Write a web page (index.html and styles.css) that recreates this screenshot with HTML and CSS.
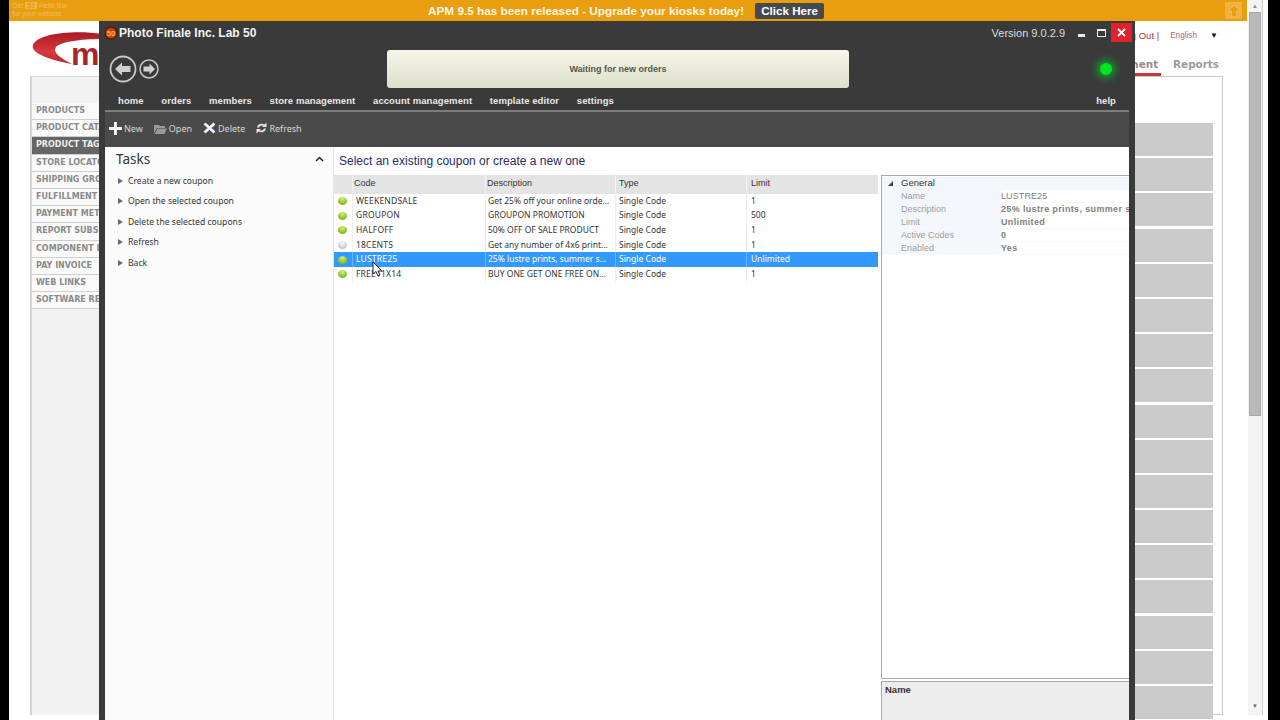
FILE: index.html
```html
<!DOCTYPE html>
<html lang="en">
<head>
<meta charset="utf-8">
<title>Photo Finale Inc. Lab 50</title>
<link rel="stylesheet" href="styles.css">
</head>
<body>
<div class="site">
  <div class="page">
    <div class="hellobar">
      <div class="hello-promo">Get <b>53</b> Hello Bar<br>for your website</div>
      <div class="hello-msg">APM 9.5 has been released - Upgrade your kiosks today!</div>
      <a class="hello-btn">Click Here</a>
      <div class="hello-up"><svg width="16" height="16" viewBox="0 0 16 16"><path d="M8 2 L14 8 H10.5 V14 H5.5 V8 H2 Z" fill="#e99e10" stroke="#f5bd55"/></svg></div>
    </div>
    <header class="site-head">
      <svg class="logo" width="80" height="46" viewBox="0 0 80 46"><defs><linearGradient id="swoosh" x1="0" y1="0" x2="0" y2="1"><stop offset="0" stop-color="#a81c24"/><stop offset=".6" stop-color="#d8383c"/><stop offset="1" stop-color="#b52a30"/></linearGradient></defs><path d="M72 4 C45 0 8 3 3 15 C0 23 20 30 42 34 C30 28 22 22 26 17 C30 12 50 9 72 9 Z" fill="url(#swoosh)"/><text x="41" y="35" class="logo-m">m</text></svg>
      <div class="head-right">
        <div class="util"><span class="util-out">Log Out |</span><span class="util-lang">English</span><span class="util-arrow">▼</span></div>
        <nav class="tabs"><span class="tab tab-on">Management</span><span class="tab">Reports</span></nav>
      </div>
    </header>
    <div class="page-main">
      <aside class="sidebar">
        <div class="side-item">PRODUCTS</div>
        <div class="side-item">PRODUCT CATALOG</div>
        <div class="side-item side-on">PRODUCT TAGS</div>
        <div class="side-item">STORE LOCATOR</div>
        <div class="side-item">SHIPPING GROUPS</div>
        <div class="side-item">FULFILLMENT</div>
        <div class="side-item">PAYMENT METHODS</div>
        <div class="side-item">REPORT SUBSCRIPTIONS</div>
        <div class="side-item">COMPONENT LIBRARY</div>
        <div class="side-item">PAY INVOICE</div>
        <div class="side-item">WEB LINKS</div>
        <div class="side-item">SOFTWARE RELEASES</div>
      </aside>
      <section class="panel">
        <div class="block"></div><div class="block"></div><div class="block"></div><div class="block"></div>
        <div class="block"></div><div class="block"></div><div class="block"></div><div class="block"></div>
        <div class="block"></div><div class="block"></div><div class="block"></div><div class="block"></div>
        <div class="block"></div><div class="block"></div><div class="block"></div><div class="block"></div>
        <div class="block"></div>
      </section>
    </div>
  </div>
  <div class="scrollbar">
    <div class="sb-track">
      <span class="sb-arrow">▲</span>
      <div class="sb-thumb"></div>
      <span class="sb-arrow sb-down">▼</span>
    </div>
  </div>
</div>

<main class="window">
  <div class="titlebar">
    <svg class="app-icon" width="14" height="14" viewBox="0 0 14 14"><circle cx="7" cy="7" r="6.5" fill="#4a1a10"/><circle cx="7" cy="7" r="5.3" fill="#c4401a"/><text x="7" y="9.800" class="app-icon-text">50</text></svg>
    <span class="app-title">Photo Finale Inc. Lab 50</span>
    <span class="version">Version 9.0.2.9</span>
    <svg class="win-btn" width="7" height="3" viewBox="0 0 7 3"><rect width="7" height="3" fill="#e8e8e8"/></svg>
    <svg class="win-max" width="9" height="8" viewBox="0 0 9 8"><rect x=".5" y=".5" width="8" height="7" fill="none" stroke="#f0f0f0"/><rect width="9" height="2" fill="#f0f0f0"/></svg>
    <div class="win-close"><svg width="9" height="9" viewBox="0 0 9 9"><path d="M1 1 L8 8 M8 1 L1 8" stroke="#fff" stroke-width="1.8"/></svg></div>
  </div>
  <div class="app-head">
    <div class="nav-arrows">
      <svg width="28" height="28" viewBox="0 0 28 28"><circle cx="14" cy="14" r="12.500" fill="none" stroke="#c8c8c8" stroke-width="1.800"/><path d="M6 14 L13 7.500 V11 H21.500 V17 H13 V20.500 Z" fill="#cfcfcf"/></svg>
      <svg width="20" height="20" viewBox="0 0 20 20"><circle cx="10" cy="10" r="9" fill="none" stroke="#c8c8c8" stroke-width="1.500"/><path d="M16 10 L10.500 4.500 V7.500 H4.500 V12.500 H10.500 V15.500 Z" fill="#cfcfcf"/></svg>
    </div>
    <div class="status">Waiting for new orders</div>
    <div class="led-wrap"><div class="led"></div></div>
  </div>
  <nav class="app-nav">
    <span>home</span><span>orders</span><span>members</span><span>store management</span><span>account management</span><span>template editor</span><span>settings</span>
    <span class="nav-help">help</span>
  </nav>
  <div class="toolbar">
    <span class="tool"><svg width="13" height="13" viewBox="0 0 13 13"><path d="M5 0 H8 V5 H13 V8 H8 V13 H5 V8 H0 V5 H5 Z" fill="#f2f2f2"/></svg>New</span>
    <span class="tool"><svg width="13" height="11" viewBox="0 0 13 11"><path d="M0 2 H5 L6 3 H11 V5 H3 L0 10 Z M3.500 5.500 H13 L10.500 11 H0.500 Z" fill="#9a9a9a"/></svg>Open</span>
    <span class="tool"><svg width="13" height="12" viewBox="0 0 13 12"><path d="M1.500 1.500 L11.500 10.500 M11.500 1.500 L1.500 10.500" stroke="#f2f2f2" stroke-width="3"/></svg>Delete</span>
    <span class="tool"><svg width="11" height="12" viewBox="0 0 11 12"><path d="M1 5.500 C1.500 2.500 5 .5 8.500 2.500 L10.500 .5 V5 H6 L7.500 3.800 C5.500 2.800 3.500 3.800 3 5.500 Z M10 6.500 C9.500 9.500 6 11.500 2.500 9.500 L.5 11.500 V7 H5 L3.500 8.200 C5.500 9.200 7.500 8.200 8 6.500 Z" fill="#e6e6e6"/></svg>Refresh</span>
  </div>
  <div class="app-body">
    <aside class="tasks">
      <div class="tasks-head"><span class="tasks-title">Tasks</span><svg width="9" height="6" viewBox="0 0 9 6"><path d="M1 5 L4.500 1.500 L8 5" fill="none" stroke="#222" stroke-width="1.500"/></svg></div>
      <ul class="task-list">
        <li>Create a new coupon</li>
        <li>Open the selected coupon</li>
        <li>Delete the selected coupons</li>
        <li>Refresh</li>
        <li>Back</li>
      </ul>
    </aside>
    <section class="list-pane">
      <h1 class="list-title">Select an existing coupon or create a new one</h1>
      <div class="grid-row grid-head"><span></span><span>Code</span><span>Description</span><span>Type</span><span>Limit</span></div>
      <div class="grid-row"><i class="dot"></i><span>WEEKENDSALE</span><span>Get 25% off your online orde...</span><span>Single Code</span><span>1</span></div>
      <div class="grid-row"><i class="dot"></i><span>GROUPON</span><span>GROUPON PROMOTION</span><span>Single Code</span><span>500</span></div>
      <div class="grid-row"><i class="dot"></i><span>HALFOFF</span><span>50% OFF OF SALE PRODUCT</span><span>Single Code</span><span>1</span></div>
      <div class="grid-row"><i class="dot dot-off"></i><span>18CENTS</span><span>Get any number of 4x6 print...</span><span>Single Code</span><span>1</span></div>
      <div class="grid-row grid-sel"><i class="dot"></i><span>LUSTRE25</span><span>25% lustre prints, summer s...</span><span>Single Code</span><span>Unlimited</span></div>
      <div class="grid-row"><i class="dot"></i><span>FREE11X14</span><span>BUY ONE GET ONE FREE ON...</span><span>Single Code</span><span>1</span></div>
    </section>
    <section class="props-pane">
      <div class="props">
        <div class="prop-group"><i class="prop-tri"></i>General</div>
        <div class="prop"><span>Name</span><b class="prop-plain">LUSTRE25</b></div>
        <div class="prop"><span>Description</span><b>25% lustre prints, summer sale</b></div>
        <div class="prop"><span>Limit</span><b>Unlimited</b></div>
        <div class="prop"><span>Active Codes</span><b>0</b></div>
        <div class="prop"><span>Enabled</span><b>Yes</b></div>
      </div>
      <div class="prop-help">Name</div>
    </section>
  </div>
  <svg class="cursor" width="11" height="16" viewBox="0 0 11 16"><path d="M1 1 V13 L4 10.500 L6 15 L8 14 L6 10 H10 Z" fill="#fff" stroke="#223" stroke-width="1"/></svg>
</main>
</body>
</html>
```
FILE: styles.css
```css
* { box-sizing: border-box; }
html, body { margin: 0; height: 720px; overflow: hidden; }
body { background: #000; padding-left: 9px; font-family: "Liberation Sans", Arial, sans-serif; position: relative; }

.site { width: 1259px; height: 720px; display: flex; background: #fff; }
.page { width: 1238px; height: 720px; display: flex; flex-direction: column; }

.hellobar { height: 21px; background: #e99e10; display: flex; align-items: center; color: #fff; position: relative; padding-left: 419px; flex: none; }
.hello-promo { position: absolute; left: 3px; top: 2px; font-size: 7px; line-height: 8px; color: #f2bd5e; }
.hello-promo b { background: #f0b64c; color: #e99e10; padding: 0 2px; }
.hello-msg { font-size: 11.750px; font-weight: 700; color: #fdf6e6; }
.hello-btn { margin-left: 11px; width: 69px; height: 16px; background: #454a50; border-radius: 2px; font-size: 11.600px; font-weight: 700; line-height: 16px; text-align: center; color: #fff; }
.hello-up { position: absolute; right: 5px; top: 2px; width: 17px; height: 17px; background: #efb044; display: flex; align-items: center; justify-content: center; }

.site-head { height: 55px; display: flex; justify-content: space-between; flex: none; }
.logo { margin: 9px 0 0 21px; }
.logo-m { font: 700 32px "Liberation Sans", Arial, sans-serif; fill: #a8262b; }
.head-right { display: flex; flex-direction: column; align-items: flex-end; padding-right: 28px; }
.util { height: 28px; display: flex; align-items: center; font-size: 8.200px; margin-right: 2px; }
.util-out { color: #b0343a; font-size: 9.500px; width: 60px; text-align: right; white-space: nowrap; }
.util-lang { color: #b8607a; margin-left: 11px; }
.util-arrow { color: #111; margin-left: 13px; font-size: 8px; width: 7px; white-space: nowrap; }
.tabs { display: flex; gap: 12px; height: 27px; }
.tab { font: 700 10.400px "DejaVu Sans", Verdana, sans-serif; color: #9a9a9a; padding-top: 9px; height: 27px; }
.tab-on { border-bottom: 3px solid #c8343a; color: #9a8a8a; padding-right: 3px; }

.page-main { flex: none; height: 639px; display: flex; margin: 0 24px 0 21px; }
.sidebar { width: 150px; height: 639px; background: #f2f2f2; border-left: 2px solid #d4d4d4; border-top: 1px solid #d8d8d8; padding-top: 26px; flex: none; }
.side-item { height: 17.200px; background: #fafafa; border-bottom: 1px solid #cfcfcf; padding-left: 4px; font: 700 8px/16px "DejaVu Sans", Verdana, sans-serif; color: #8a8a8a; white-space: nowrap; overflow: hidden; }
.side-on { background: #666; color: #eee; }
.panel { flex: 1; height: 639px; border: 1px solid #c8c8c8; padding: 46px 9px 0 0; display: flex; flex-direction: column; gap: 2.200px; }
.block { height: 33px; background: #cbcbcb; flex: none; }

.scrollbar { width: 21px; height: 715px; background: #fff; }
.sb-track { margin-left: 1px; width: 15px; height: 715px; background: #f4f4f4; border-right: 1px solid #d0d0d0; display: flex; flex-direction: column; align-items: center; }
.sb-arrow { font-size: 6px; height: 12px; line-height: 12px; color: #888; }
.sb-thumb { width: 12px; height: 404px; background: #b9b9b9; border: 1px solid #a8a8a8; }
.sb-down { margin-top: auto; line-height: 14px; height: 16px; color: #666; }

.window { position: absolute; left: 99px; top: 21px; width: 1036px; height: 699px; background: #3a3a3a; display: flex; flex-direction: column; overflow: hidden; color: #fff; }
.titlebar { height: 23px; display: flex; align-items: center; padding: 0 3px 0 5px; flex: none; }
.app-icon { flex: none; }
.app-icon-text { font: 700 7.500px "Liberation Sans", Arial, sans-serif; fill: #f6b838; text-anchor: middle; }
.app-title { margin-left: 1px; font-size: 12px; font-weight: 700; color: #f2f2f2; }
.version { margin-left: auto; font-size: 11px; color: #dcdcdc; }
.win-btn { margin: 6px 0 0 13px; }
.win-max { margin-left: 12px; }
.win-close { margin-left: 5px; width: 21px; height: 19px; background: #e0202c; display: flex; align-items: center; justify-content: center; }

.app-head { height: 46px; display: grid; grid-template-columns: 282px 462px 1fr; align-items: center; padding: 0 0 0 6px; flex: none; }
.nav-arrows { display: flex; align-items: center; gap: 2px; padding-left: 4px; padding-top: 4px; }
.status { height: 38px; margin-top: 4px; border-radius: 3px; background: linear-gradient(#f6f6ea, #dddfca); color: #55564c; font-size: 9px; font-weight: 700; line-height: 38px; text-align: center; }
.led-wrap { display: flex; justify-content: flex-end; padding: 4px 23px 0 0; }
.led { width: 12px; height: 12px; border-radius: 50%; background: #00e61e; box-shadow: 0 0 7px 4px rgba(0, 210, 40, .55); }

.app-nav { height: 20px; margin: 0 6px; padding: 0 13px; display: flex; align-items: center; gap: 17.700px; font-size: 9.500px; letter-spacing: .08px; font-weight: 700; color: #e8e8e8; flex: none; }
.nav-help { margin-left: auto; }
.toolbar { margin: 0 6px; height: 37px; border-top: 2px solid #7c7c7c; background: #4a4a4a; display: flex; align-items: center; padding: 0 0 3px 4px; gap: 11px; flex: none; font-family: "Noto Sans", sans-serif; font-size: 9px; color: #d8d8d8; }
.tool { display: flex; align-items: center; gap: 2px; }

.app-body { flex: 1; margin: 0 6px; background: #fff; display: flex; color: #333; min-height: 0; }
.tasks { width: 229px; background: #fbfbfb; border-right: 1px solid #e4e4e4; flex: none; padding: 3px 9px 0 11px; }
.tasks-head { display: flex; align-items: center; justify-content: space-between; height: 18px; }
.tasks-title { font-family: "Noto Sans", sans-serif; font-size: 13.500px; color: #333; }
.task-list { list-style: none; margin: 3px 0 0; padding: 0; }
.task-list li { height: 20.400px; line-height: 20.400px; padding-left: 12px; font-family: "Noto Sans", sans-serif; font-size: 8.600px; color: #333; position: relative; }
.task-list li::before { content: ""; position: absolute; left: 2px; top: 7px; border-left: 5px solid #5a7088; border-top: 3.500px solid transparent; border-bottom: 3.500px solid transparent; }

.list-pane { width: 544px; flex: none; }
.list-title { height: 28px; margin: 0; padding: 6px 0 0 5px; font: 400 12px/16px "Liberation Sans", Arial, sans-serif; color: #2a2a6a; }
.grid-row { display: grid; grid-template-columns: 18px 133px 130px 131px 132px; height: 14.700px; font-family: "Noto Sans", sans-serif; font-size: 8.500px; line-height: 14.700px; color: #333; align-items: center; }
.grid-row > span { padding-left: 3px; white-space: nowrap; border-left: 1px solid #eee; }
.grid-row > span:nth-child(2) { letter-spacing: .2px; }
.grid-row > span:nth-child(3) { padding-left: 2px; }
.grid-row > span:nth-child(5) { padding-left: 4px; }
.grid-row.grid-head { height: 18.500px; line-height: 16px; background: #e4e4e4; font-family: "Liberation Sans", Arial, sans-serif; font-size: 9px; color: #333; }
.grid-row.grid-head > span { border-left: 1px solid #f4f4f4; height: 18px; letter-spacing: 0; }
.grid-row.grid-head > span:first-child { border-left: 0; }
.grid-row.grid-head > span:nth-child(2), .grid-row.grid-head > span:nth-child(3) { padding-left: 1px; }
.grid-sel { background: #3399ff; color: #fff; }
.grid-sel > span { border-left-color: #6db5ff; }
.dot { width: 9px; height: 8px; margin-left: 4px; border-radius: 50%; background: radial-gradient(circle at 50% 25%, #d5f07a, #7cc01e 70%); display: block; }
.dot-off { background: radial-gradient(circle at 50% 25%, #fafafa, #c4c4c4 75%); }

.props-pane { flex: 1; padding: 28px 0 0 3px; display: flex; flex-direction: column; min-width: 0; }
.props { height: 504px; border: 1px solid #aaa; border-right: 0; padding-top: 1px; overflow: hidden; }
.prop-group { height: 13px; line-height: 11px; padding-left: 19px; font-size: 9.500px; color: #333; position: relative; background: #f3f6fa; }
.prop-tri { position: absolute; left: 6px; top: 4px; border-right: 5px solid #444; border-top: 5px solid transparent; }
.prop { height: 13px; line-height: 13px; font-size: 9px; display: grid; grid-template-columns: 119px 1fr; color: #a0a0a0; white-space: nowrap; border-bottom: 1px solid #f8f8f8; background: linear-gradient(90deg, #f3f6fa 119px, #fff 119px); }
.prop span { padding-left: 19px; }
.prop b { color: #808080; letter-spacing: .35px; }
.prop b.prop-plain { font-weight: 400; letter-spacing: .1px; }
.prop-help { flex: 1; margin-top: 2px; border: 1px solid #aaa; border-right: 0; border-bottom: 0; background: #ededed; padding: 2px 3px; font-size: 9.500px; font-weight: 700; color: #333; }

.cursor { position: absolute; left: 273px; top: 240px; }
```
